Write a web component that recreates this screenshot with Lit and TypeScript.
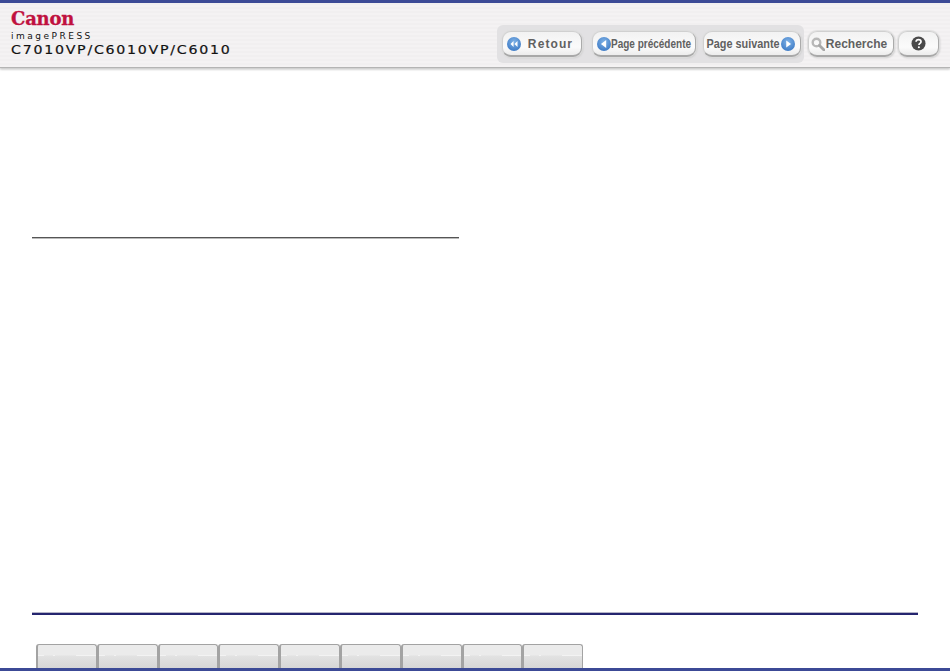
import { LitElement, html, css, svg } from "lit";
import { customElement } from "lit/decorators.js";

const blueDisc = (inner: unknown) => html`<svg class="ico" viewBox="0 0 16 16" width="14" height="14">
  <defs><radialGradient id="bd" cx="50%" cy="35%" r="70%"><stop offset="0" stop-color="#7fb2e6"/><stop offset="1" stop-color="#3a78c4"/></radialGradient></defs>
  <circle cx="8" cy="8" r="8" fill="url(#bd)"/>${inner}</svg>`;

@customElement("app-root")
export class AppRoot extends LitElement {
  static styles = css`
    :host { display: flex; flex-direction: column; width: 950px; height: 671px; background: #fff; overflow: hidden; font-family: "Liberation Sans", Arial, sans-serif; }
    .topbar { height: 3px; background: #3c4a96; flex: none; }
    .header { height: 64px; flex: none; display: flex; align-items: flex-start; justify-content: space-between;
      background: repeating-linear-gradient(180deg, #f1eff0 0 2px, #f4f2f3 2px 4px);
      box-shadow: 0 1px 0 #b4b4b4, 0 2px 2px #c8c8c8, 0 3px 2px #e6e6e6; position: relative; }
    .brand { display: flex; flex-direction: column; padding: 6px 0 0 11px; }
    .canon { font-family: "DejaVu Serif", serif; font-weight: 700; font-size: 18px; line-height: 20px; color: #c0113f; letter-spacing: -.2px; -webkit-text-stroke: .3px #c0113f; }
    .line { font-family: "DejaVu Sans", sans-serif; color: #111; line-height: 12px; transform-origin: left; }
    .product { font-size: 9px; letter-spacing: 2.5px; margin-top: 1px; }
    .model { font-size: 13px; letter-spacing: 1.6px; line-height: 14px; margin-top: 1px; transform: scaleX(1.09); -webkit-text-stroke: .2px #111; }
    .tools { display: flex; align-items: center; padding: 22px 11px 0 0; }
    .group { display: flex; gap: 7px; align-items: center; height: 38px; padding: 0 3px 0 5px; margin-right: 4px; border-radius: 6px; background: #e2e1e3; }
    .btn { height: 26px; box-sizing: border-box; display: flex; align-items: center; justify-content: center; gap: 0; border-radius: 9px;
      background: linear-gradient(180deg, #f2f2f2, #fbfbfb 65%, #ececec); border: 1px solid #d0d0d0; border-right-color: #ababab; border-bottom: 2px solid #a8a8a8;
      box-shadow: 0 0 1px 1px #dedede, 1px 1px 2px #c4c4c4; color: #616161; font-weight: 700; font-size: 12px; white-space: nowrap; }
    .retour { width: 80px; margin-right: 3px; gap: 7px; padding-right: 4px; letter-spacing: 1.1px; }
    .prev { width: 104px; }
    .next { width: 98px; justify-content: flex-start; }
    .search { width: 86px; margin-right: 4px; gap: 1px; padding-right: 4px; }
    .help { width: 41px; }
    .narrow { font-size: 12.5px; display: inline-block; transform: scaleX(.8); margin: 0 -10px; }
    .next .narrow { transform: scaleX(.87); margin: 0 -4px 0 -3.5px; }
    .ico { flex: none; display: block; position: relative; }
    .main { flex: 1; display: flex; flex-direction: column; padding: 170px 32px 0; min-height: 0; }
    .rule { width: 427px; height: 1px; background: #555; box-shadow: 0 1px 0 #bbb; flex: none; }
    .footer { margin-top: auto; display: flex; flex-direction: column; }
    .navline { height: 2px; width: 886px; background: #25256f; border-top: 1px solid #b5b5c8; flex: none; }
    .tabs { display: flex; padding: 29px 0 0 4px; }
    .tab { width: 60.8px; height: 24px; box-sizing: border-box; border: 1px solid #a3a3a3; border-bottom: 0; border-left-width: 2px; border-radius: 3px 3px 0 0;
      background:
        linear-gradient(90deg, #f3f3f3 0 10%, transparent 10% 26%, #f3f3f3 26% 30%, transparent 30% 66%, #f3f3f3 66% 100%) 0 10px / 100% 1px no-repeat,
        linear-gradient(180deg, #ebebeb 0 10px, #e2e2e2 11px, #d6d6d6 100%); }
    .bottombar { height: 3px; background: #3c4a96; flex: none; }
  `;

  render() {
    const tabs = Array.from({ length: 9 });
    return html`
      <div class="topbar"></div>
      <header class="header">
        <div class="brand">
          <div class="canon">Canon</div>
          <div class="line product">imagePRESS</div>
          <div class="line model">C7010VP/C6010VP/C6010</div>
        </div>
        <div class="tools">
          <div class="group">
            <div class="btn retour">
              ${blueDisc(svg`<path d="M7.5 4.5 4 8l3.5 3.5zM12 4.5 8.5 8l3.5 3.5z" fill="#fff"/>`)}
              <span>Retour</span>
            </div>
            <div class="btn prev">
              ${blueDisc(svg`<path d="M10.5 3.5 4.5 8l6 4.5z" fill="#fff"/>`)}
              <span class="narrow">Page précédente</span>
            </div>
            <div class="btn next">
              <span class="narrow">Page suivante</span>
              ${blueDisc(svg`<path d="M6 4l5.5 4L6 12z" fill="#fff"/>`)}
            </div>
          </div>
          <div class="btn search">
            <svg class="ico" viewBox="0 0 14 14" width="14" height="14">
              <circle cx="5.5" cy="5.5" r="3.8" fill="none" stroke="#b8b8b8" stroke-width="2.4"/>
              <path d="M8.5 8.5 13 13" stroke="#a8a8a8" stroke-width="2.8" stroke-linecap="round"/>
            </svg>
            <span>Recherche</span>
          </div>
          <div class="btn help">
            <svg class="ico" viewBox="0 0 16 16" width="15" height="15">
              <circle cx="8" cy="8" r="7.5" fill="#4a4a4a"/>
              <path d="M5.4 6.2C5.5 4.6 6.6 3.8 8 3.8c1.6 0 2.7.9 2.7 2.2 0 1.9-2.2 1.9-2.2 3.6" fill="none" stroke="#fff" stroke-width="1.8"/>
              <circle cx="8.4" cy="12" r="1.1" fill="#fff"/>
            </svg>
          </div>
        </div>
      </header>
      <main class="main">
        <div class="rule"></div>
        <div class="footer">
          <div class="navline"></div>
          <div class="tabs">${tabs.map(() => html`<div class="tab"></div>`)}</div>
        </div>
      </main>
      <div class="bottombar"></div>
    `;
  }
}
